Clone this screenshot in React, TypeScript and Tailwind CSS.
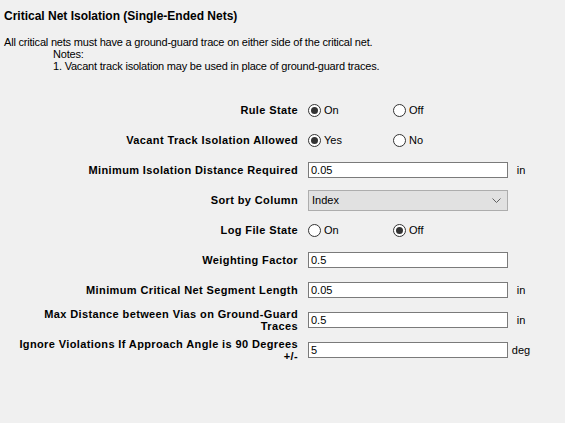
import React from 'react';

type Row =
  | { kind: 'radio'; label: string; options: [string, string]; checked: 0 | 1 }
  | { kind: 'text'; label: React.ReactNode; value: string; unit?: string }
  | { kind: 'select'; label: string; value: string };

const rows: Row[] = [
  { kind: 'radio', label: 'Rule State', options: ['On', 'Off'], checked: 0 },
  { kind: 'radio', label: 'Vacant Track Isolation Allowed', options: ['Yes', 'No'], checked: 0 },
  { kind: 'text', label: 'Minimum Isolation Distance Required', value: '0.05', unit: 'in' },
  { kind: 'select', label: 'Sort by Column', value: 'Index' },
  { kind: 'radio', label: 'Log File State', options: ['On', 'Off'], checked: 1 },
  { kind: 'text', label: 'Weighting Factor', value: '0.5' },
  { kind: 'text', label: 'Minimum Critical Net Segment Length', value: '0.05', unit: 'in' },
  {
    kind: 'text',
    label: (
      <>
        Max Distance between Vias on Ground-Guard
        <br />
        Traces
      </>
    ),
    value: '0.5',
    unit: 'in',
  },
  {
    kind: 'text',
    label: (
      <>
        Ignore Violations If Approach Angle is 90 Degrees
        <br />
        +/-
      </>
    ),
    value: '5',
    unit: 'deg',
  },
];

const Radio = ({ checked, label }: { checked: boolean; label: string }) => (
  <div className="flex items-center gap-[3px]">
    <span className="flex h-[13px] w-[13px] items-center justify-center rounded-full border border-[#333333] bg-white">
      {checked && <span className="h-[7px] w-[7px] rounded-full bg-[#333333]" />}
    </span>
    <span>{label}</span>
  </div>
);

const Control = ({ row }: { row: Row }) => {
  if (row.kind === 'radio') {
    return (
      <div className="grid grid-cols-[85px_85px] items-center">
        <Radio checked={row.checked === 0} label={row.options[0]} />
        <Radio checked={row.checked === 1} label={row.options[1]} />
      </div>
    );
  }
  if (row.kind === 'select') {
    return (
      <div className="flex h-[21px] w-[200px] items-center justify-between border border-[#adadad] bg-[#e1e1e1] pl-[3px] pr-[6px]">
        <span>{row.value}</span>
        <svg width="9" height="5" viewBox="0 0 9 5" fill="none">
          <path d="M0.5 0.5 L4.5 4.5 L8.5 0.5" stroke="#606060" strokeWidth="1" />
        </svg>
      </div>
    );
  }
  return (
    <div className="flex h-[16px] w-[200px] items-center border border-[#7a7a7a] bg-white pl-[2px]">
      {row.value}
    </div>
  );
};

export default function App() {
  return (
    <div className="h-[423px] w-[565px] overflow-hidden bg-[#f0f0f0] text-[11px] leading-[12px] text-black [font-family:'Liberation_Sans',Arial,sans-serif]">
      <div className="pl-[4px] pt-[9px] text-[12px] font-bold leading-[14px]">
        Critical Net Isolation (Single-Ended Nets)
      </div>
      <div className="pl-[4px] pt-[13px] tracking-[-0.2px]">
        <div>All critical nets must have a ground-guard trace on either side of the critical net.</div>
        <div className="pl-[49px]">Notes:</div>
        <div className="pl-[49px]">1. Vacant track isolation may be used in place of ground-guard traces.</div>
      </div>

      <div className="mt-[23px] grid grid-cols-[308px_200px_24px] [grid-auto-rows:30px] items-center">
        {rows.map((row, i) => (
          <React.Fragment key={i}>
            <div className="pr-[10px] text-right font-bold tracking-[0.38px]">{row.label}</div>
            <Control row={row} />
            <div className="pl-[2px] text-center">{row.kind === 'text' ? row.unit : ''}</div>
          </React.Fragment>
        ))}
      </div>
    </div>
  );
}
